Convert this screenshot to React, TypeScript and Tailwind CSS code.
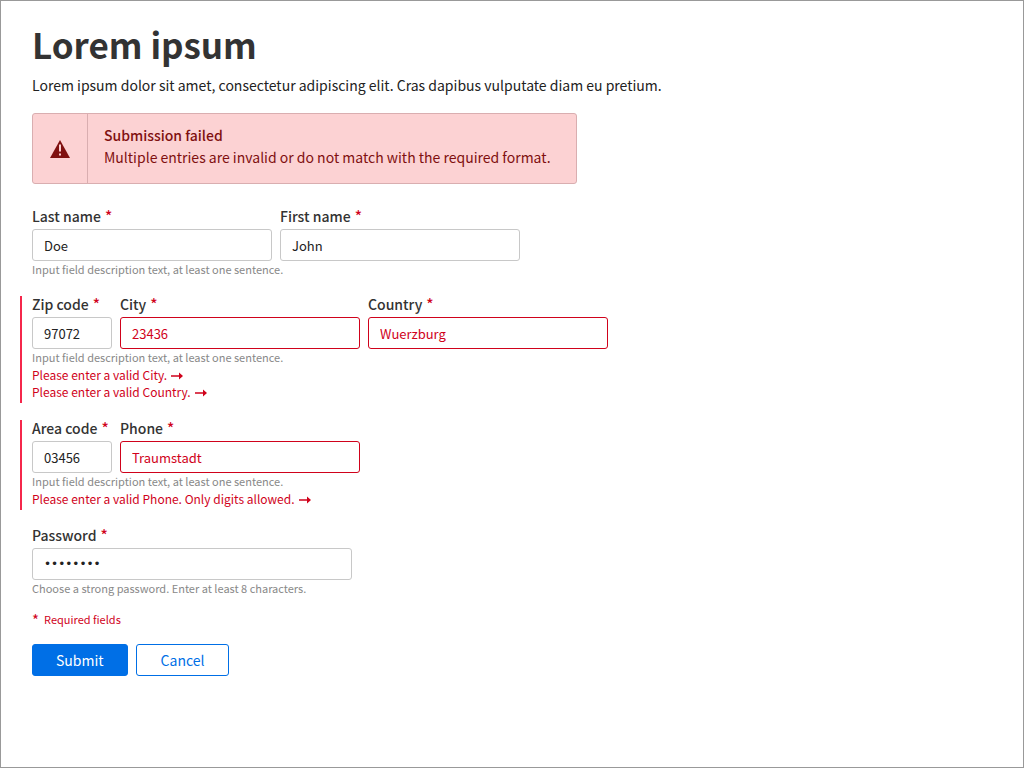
import type { ReactNode } from "react";

function Star() {
  return <span className="text-[15px] text-[#d0021b]">*</span>;
}

type FieldProps = {
  id: string;
  label: string;
  value: string;
  size?: "small" | "medium" | "large";
  type?: string;
  invalid?: boolean;
};

const widths = { small: "w-20", medium: "w-60", large: "w-80" };

function Field({ id, label, value, size = "medium", type = "text", invalid = false }: FieldProps) {
  return (
    <div className={`${widths[size]} flex max-w-full flex-col gap-[5px]`}>
      <label htmlFor={id} className="flex gap-1 text-[14px] leading-4 font-medium whitespace-nowrap text-[#333333]">
        {label} <Star />
      </label>
      <input
        id={id}
        type={type}
        defaultValue={value}
        required
        aria-invalid={invalid}
        className={`h-8 w-full rounded-[3px] border bg-white px-[11px] outline-none ${
          type === "password" ? "font-['DejaVu_Sans',sans-serif] text-[12px]" : "text-[13px]"
        } ${invalid ? "border-[#d0021b] text-[#d0021b]" : "border-[#c8c8c8] text-[#222222]"}`}
      />
    </div>
  );
}

function Arrow() {
  return (
    <svg width="12" height="8" viewBox="0 0 12 8" aria-hidden="true" className="mt-0.5">
      <path d="M0 3.2h8V.4L12 4 8 7.6V4.8H0z" fill="currentColor" />
    </svg>
  );
}

function ErrorLink({ target, children }: { target: string; children: ReactNode }) {
  return (
    <a href={`#${target}`} className="flex items-center gap-1 text-[12px] leading-[17px] text-[#d0021b]">
      {children}
      <Arrow />
    </a>
  );
}

type GroupProps = { hint: string; errors?: ReactNode; children: ReactNode };

function Group({ hint, errors, children }: GroupProps) {
  return (
    <div className={`-ml-3 border-l-2 pl-[10px] ${errors ? "border-[#f5274b] pb-[3px]" : "border-transparent pb-px"}`}>
      <div className="flex flex-wrap gap-2">{children}</div>
      <p className="text-[11px] leading-[17px] text-[#888888]">{hint}</p>
      {errors}
    </div>
  );
}

const hint = "Input field description text, at least one sentence.";

export default function App() {
  return (
    <main className="min-h-screen border border-[#999999] bg-white px-[31px] pt-[25px] pb-10 font-['Noto_Sans_CJK_SC',sans-serif]">
      <h1 className="text-[35px] leading-9 font-bold text-[#333333]">Lorem ipsum</h1>
      <p className="mt-[11px] text-[14px] leading-6 text-[#222222]">
        Lorem ipsum dolor sit amet, consectetur adipiscing elit. Cras dapibus vulputate diam eu pretium.
      </p>

      <div role="alert" className="mt-4 flex w-fit max-w-full rounded-[3px] border border-[#d9aeb0] bg-[#fcd2d3] text-[#801010]">
        <div className="flex w-[55px] shrink-0 items-center justify-center border-r border-[#d9aeb0]">
          <svg width="20" height="18" viewBox="0 0 20 18" aria-hidden="true">
            <path d="M10 0 20 18H0z" fill="currentColor" />
            <path d="M9 4.5h2v7H9zM9 13.5h2v2H9z" fill="#fcd2d3" />
          </svg>
        </div>
        <div className="pt-[10px] pr-[25px] pb-[15px] pl-4 text-[14px] leading-[22px]">
          <p className="font-medium">Submission failed</p>
          <p>Multiple entries are invalid or do not match with the required format.</p>
        </div>
      </div>

      <form className="mt-6 flex flex-col gap-[17px]" onSubmit={(event) => event.preventDefault()}>
        <Group hint={hint}>
          <Field id="last-name" label="Last name" value="Doe" />
          <Field id="first-name" label="First name" value="John" />
        </Group>
        <Group
          hint={hint}
          errors={
            <>
              <ErrorLink target="city">Please enter a valid City.</ErrorLink>
              <ErrorLink target="country">Please enter a valid Country.</ErrorLink>
            </>
          }
        >
          <Field id="zip" label="Zip code" value="97072" size="small" />
          <Field id="city" label="City" value="23436" invalid />
          <Field id="country" label="Country" value="Wuerzburg" invalid />
        </Group>
        <Group hint={hint} errors={<ErrorLink target="phone">Please enter a valid Phone. Only digits allowed.</ErrorLink>}>
          <Field id="area" label="Area code" value="03456" size="small" />
          <Field id="phone" label="Phone" value="Traumstadt" invalid />
        </Group>
        <Group hint="Choose a strong password. Enter at least 8 characters.">
          <Field id="password" label="Password" value="password" type="password" size="large" />
        </Group>
        <div className="-mt-1 flex flex-col gap-4">
          <p className="flex gap-[5px] text-[11px] leading-[17px] text-[#d0021b]">
            <Star /> Required fields
          </p>
          <div className="flex gap-2">
            <button type="submit" className="h-8 rounded-[3px] border border-[#006fe6] bg-[#006fe6] px-[23px] text-[14px] text-white">
              Submit
            </button>
            <button type="button" className="h-8 rounded-[3px] border border-[#006fe6] bg-white px-6 text-[14px] text-[#006fe6]">
              Cancel
            </button>
          </div>
        </div>
      </form>
    </main>
  );
}
